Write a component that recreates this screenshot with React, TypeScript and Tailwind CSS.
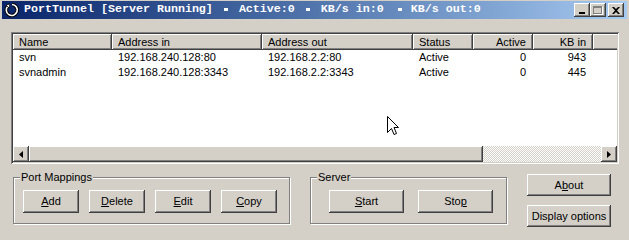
import type { ReactNode } from 'react'

const raised =
  'shadow-[inset_-1px_-1px_0_#404040,inset_1px_1px_0_#ffffff,inset_-2px_-2px_0_#808080]'

function Button({
  children,
  className = '',
}: {
  children: ReactNode
  className?: string
}) {
  return (
    <div
      className={`flex items-center justify-center bg-[#d4d0c8] text-black ${raised} ${className}`}
    >
      {children}
    </div>
  )
}

function GroupBox({
  label,
  children,
  className = '',
}: {
  label: string
  children: ReactNode
  className?: string
}) {
  return (
    <div
      className={`relative border border-[#808080] shadow-[inset_1px_1px_0_#ffffff,1px_1px_0_#ffffff] ${className}`}
    >
      <span className="absolute -top-[7px] left-[6px] bg-[#d4d0c8] px-[1px] leading-[13px]">
        {label}
      </span>
      {children}
    </div>
  )
}

function Sep() {
  return <span className="inline-block w-[4px] h-[3px] bg-white mx-[11px] align-middle" />
}

function CaptionButton({ children }: { children: ReactNode }) {
  return (
    <div
      className={`w-[16px] h-[14px] flex items-center justify-center bg-[#d4d0c8] ${raised}`}
    >
      {children}
    </div>
  )
}

const columns = [
  { name: 'Name', w: 'w-[99px]', pad: 'pl-[6px]' },
  { name: 'Address in', w: 'w-[150px]', pad: 'pl-[6px]' },
  { name: 'Address out', w: 'w-[151px]', pad: 'pl-[6px]' },
  { name: 'Status', w: 'w-[60px]', pad: 'pl-[6px]' },
  { name: 'Active', w: 'w-[60px]', pad: 'justify-end text-right pr-[7px]' },
  { name: 'KB in', w: 'w-[60px]', pad: 'justify-end text-right pr-[7px]' },
  { name: 'KB out', w: 'w-[60px]', pad: 'justify-end text-right pr-[2px]' },
]

const rows = [
  ['svn', '192.168.240.128:80', '192.168.2.2:80', 'Active', '0', '943', ''],
  ['svnadmin', '192.168.240.128:3343', '192.168.2.2:3343', 'Active', '0', '445', ''],
]

export default function App() {
  return (
    <div className="relative w-[629px] h-[240px] overflow-hidden bg-[#d4d0c8] text-[11px] text-black font-['Liberation_Sans',Arial,sans-serif]">
      {/* title bar */}
      <div className="mx-[2px] mt-[1px] h-[18px] flex items-center bg-linear-to-r from-[#0a246a] to-[#a6caf0]">
        <svg width="16" height="16" viewBox="0 0 16 16" className="ml-[2px]">
          <path d="M4 4 A5.5 5.5 0 1 0 8 2.5" fill="none" stroke="#000" strokeWidth="3.5" />
          <path d="M4 4 A5.5 5.5 0 1 0 8 2.5" fill="none" stroke="#fff" strokeWidth="1.6" />
          <path d="M2 3 L6 2 L5 6 Z" fill="#fff" stroke="#000" strokeWidth="0.8" />
        </svg>
        <div className="ml-[4px] flex items-center text-white font-bold text-[11.67px] leading-none whitespace-pre font-['Liberation_Mono',monospace]">
          <span>PortTunnel [Server Running]</span>
          <Sep />
          <span>Active:0</span>
          <Sep />
          <span>KB/s in:0</span>
          <span className="inline-block w-[4px] h-[3px] bg-white ml-[14px] mr-[9px] align-middle" />
          <span>KB/s out:0</span>
        </div>
        <div className="ml-auto mr-[3px] flex items-center">
          <CaptionButton>
            <span className="block w-[6px] h-[2px] bg-black mt-[6px] -ml-[1px]" />
          </CaptionButton>
          <CaptionButton>
            <span className="block w-[9px] h-[8px] border border-t-2 border-[#808080] shadow-[1px_1px_0_#ffffff] -ml-[1px]" />
          </CaptionButton>
          <div className="ml-[2px]">
            <CaptionButton>
              <svg width="8" height="7" viewBox="0 0 8 7" className="-ml-[1px]">
                <path d="M0 0 L2 0 L4 2 L6 0 L8 0 L5 3.5 L8 7 L6 7 L4 5 L2 7 L0 7 L3 3.5 Z" fill="#000" />
              </svg>
            </CaptionButton>
          </div>
        </div>
      </div>

      {/* list view */}
      <div className="ml-[11px] mt-[13px] w-[608px] h-[132px] p-[2px] shadow-[inset_1px_1px_0_#808080,inset_-1px_-1px_0_#ffffff,inset_2px_2px_0_#404040,inset_-2px_-2px_0_#d4d0c8]">
        <div className="w-full h-full bg-white flex flex-col overflow-hidden">
          <div className="flex-1 overflow-hidden">
            <div className="flex h-[16px]">
              {columns.map((c) => (
                <div
                  key={c.name}
                  className={`${c.w} ${c.pad} shrink-0 h-full flex items-center overflow-hidden whitespace-nowrap bg-[#d4d0c8] ${raised}`}
                >
                  {c.name}
                </div>
              ))}
            </div>
            {rows.map((r) => (
              <div key={r[0]} className="flex h-[15px] items-center">
                {r.map((v, i) => (
                  <div key={i} className={`${columns[i].w} ${columns[i].pad} shrink-0`}>
                    {v}
                  </div>
                ))}
              </div>
            ))}
          </div>
          {/* horizontal scrollbar */}
          <div className="h-[16px] flex">
            <Button className="w-[16px] h-full">
              <svg width="4" height="7" viewBox="0 0 4 7">
                <path d="M4 0 L0 3.5 L4 7 Z" fill="#000" />
              </svg>
            </Button>
            <Button className="w-[454px] h-full">{null}</Button>
            <div className="flex-1 h-full bg-[image:repeating-conic-gradient(#ffffff_0%_25%,#d4d0c8_0%_50%)] bg-[length:2px_2px]" />
            <Button className="w-[16px] h-full">
              <svg width="4" height="7" viewBox="0 0 4 7">
                <path d="M0 0 L4 3.5 L0 7 Z" fill="#000" />
              </svg>
            </Button>
          </div>
        </div>
      </div>

      {/* bottom controls */}
      <div className="flex items-start pl-[13px] mt-[10px]">
        <GroupBox label="Port Mappings" className="mt-[3px] w-[277px] h-[47px] flex gap-[10px] pl-[9px] pt-[12px]">
          <Button className="w-[56px] h-[23px]">
            <span><u>A</u>dd</span>
          </Button>
          <Button className="w-[56px] h-[23px]">
            <span><u>D</u>elete</span>
          </Button>
          <Button className="w-[56px] h-[23px]">
            <span><u>E</u>dit</span>
          </Button>
          <Button className="w-[56px] h-[23px]">
            <span><u>C</u>opy</span>
          </Button>
        </GroupBox>
        <GroupBox label="Server" className="ml-[20px] mt-[3px] w-[197px] h-[47px] flex gap-[14px] pl-[18px] pt-[12px]">
          <Button className="w-[75px] h-[23px]">
            <span><u>S</u>tart</span>
          </Button>
          <Button className="w-[75px] h-[23px]">
            <span>Sto<u>p</u></span>
          </Button>
        </GroupBox>
        <div className="ml-[20px] flex flex-col gap-[9px]">
          <Button className="w-[84px] h-[22px]">
            <span>A<u>b</u>out</span>
          </Button>
          <Button className="w-[84px] h-[22px]">
            <span>Display options</span>
          </Button>
        </div>
      </div>

      {/* mouse pointer */}
      <svg
        width="12"
        height="20"
        viewBox="0 0 12 20"
        className="absolute left-[387px] top-[116px]"
      >
        <path
          d="M0.5 0.5 L0.5 16.5 L4.5 12.5 L7 18.5 L9.5 17.5 L7 11.5 L11.5 11.5 Z"
          fill="#ffffff"
          stroke="#000000"
          strokeWidth="1"
        />
      </svg>
    </div>
  )
}
